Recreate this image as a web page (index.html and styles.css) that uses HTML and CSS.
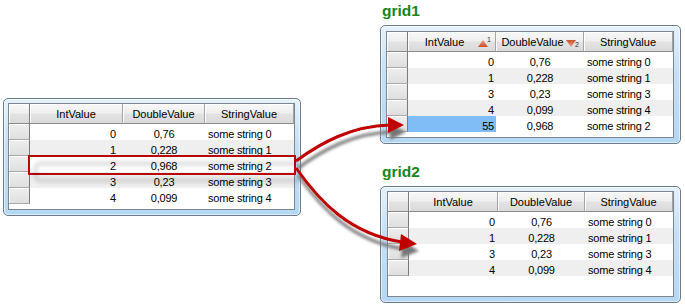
FILE: index.html
```html
<!DOCTYPE html>
<html>
<head>
<meta charset="utf-8">
<link rel="stylesheet" href="styles.css">
</head>
<body>
<div class="canvas">

  <div class="window win-src">
    <div class="grid cols-src">
      <div class="hdr">
        <div class="hc corner"></div>
        <div class="hc">IntValue</div>
        <div class="hc">DoubleValue</div>
        <div class="hc">StringValue</div>
      </div>
      <div class="row"><div class="ind"></div><div class="c num">0</div><div class="c dbl">0,76</div><div class="c str">some string 0</div></div>
      <div class="row alt"><div class="ind"></div><div class="c num">1</div><div class="c dbl">0,228</div><div class="c str">some string 1</div></div>
      <div class="row"><div class="ind"></div><div class="c num">2</div><div class="c dbl">0,968</div><div class="c str">some string 2</div></div>
      <div class="row alt"><div class="ind"></div><div class="c num">3</div><div class="c dbl">0,23</div><div class="c str">some string 3</div></div>
      <div class="row"><div class="ind"></div><div class="c num">4</div><div class="c dbl">0,099</div><div class="c str">some string 4</div></div>
    </div>
  </div>

  <div class="red-box"></div>

  <div class="node node1">
    <h2 class="title">grid1</h2>
    <div class="window win1">
      <div class="grid cols-1">
        <div class="hdr">
          <div class="hc corner"></div>
          <div class="hc sorted">IntValue
            <span class="sort">
              <svg width="10" height="7" viewBox="0 0 10 7"><defs><linearGradient id="gu" x1="0" y1="0" x2="0" y2="1"><stop offset="0" stop-color="#f0a080"/><stop offset="1" stop-color="#c8502c"/></linearGradient></defs><polygon points="5,0 10,7 0,7" fill="url(#gu)"/></svg>
              <span class="sort-n up">1</span>
            </span>
          </div>
          <div class="hc sorted">DoubleValue
            <span class="sort">
              <svg width="10" height="7" viewBox="0 0 10 7"><defs><linearGradient id="gd" x1="0" y1="0" x2="0" y2="1"><stop offset="0" stop-color="#c8502c"/><stop offset="1" stop-color="#f0a080"/></linearGradient></defs><polygon points="0,0 10,0 5,7" fill="url(#gd)"/></svg>
              <span class="sort-n down">2</span>
            </span>
          </div>
          <div class="hc">StringValue</div>
        </div>
        <div class="row"><div class="ind"></div><div class="c num">0</div><div class="c dbl">0,76</div><div class="c str">some string 0</div></div>
        <div class="row alt"><div class="ind"></div><div class="c num">1</div><div class="c dbl">0,228</div><div class="c str">some string 1</div></div>
        <div class="row"><div class="ind"></div><div class="c num">3</div><div class="c dbl">0,23</div><div class="c str">some string 3</div></div>
        <div class="row alt"><div class="ind"></div><div class="c num">4</div><div class="c dbl">0,099</div><div class="c str">some string 4</div></div>
        <div class="row"><div class="ind"></div><div class="c num sel">55</div><div class="c dbl">0,968</div><div class="c str">some string 2</div></div>
      </div>
    </div>
  </div>

  <div class="node node2">
    <h2 class="title">grid2</h2>
    <div class="window win2">
      <div class="grid cols-2">
        <div class="hdr">
          <div class="hc corner"></div>
          <div class="hc">IntValue</div>
          <div class="hc">DoubleValue</div>
          <div class="hc">StringValue</div>
        </div>
        <div class="row"><div class="ind"></div><div class="c num">0</div><div class="c dbl">0,76</div><div class="c str">some string 0</div></div>
        <div class="row alt"><div class="ind"></div><div class="c num">1</div><div class="c dbl">0,228</div><div class="c str">some string 1</div></div>
        <div class="row"><div class="ind"></div><div class="c num">3</div><div class="c dbl">0,23</div><div class="c str">some string 3</div></div>
        <div class="row alt"><div class="ind"></div><div class="c num">4</div><div class="c dbl">0,099</div><div class="c str">some string 4</div></div>
      </div>
    </div>
  </div>

  <svg class="arrows" width="685" height="305" viewBox="0 0 685 305">
    <defs>
      <filter id="blur" x="-20%" y="-20%" width="140%" height="140%">
        <feGaussianBlur stdDeviation="1.8"/>
      </filter>
    </defs>
    <g class="shadow" transform="translate(2,7)" filter="url(#blur)">
      <path d="M296 161 C 322 142, 352 126, 390 125" fill="none" stroke="#777" stroke-width="3"/>
      <polygon points="388,117 404,125 388,133" fill="#777"/>
      <path d="M296 168 C 320 202, 350 234, 402 242" fill="none" stroke="#777" stroke-width="3"/>
      <polygon points="401,234 417,244 399,251" fill="#777"/>
    </g>
    <g class="arrow">
      <path d="M296 161 C 322 142, 352 126, 390 125" fill="none" stroke="#c00000" stroke-width="3"/>
      <polygon points="388,117 404,125 388,133" fill="#c00000"/>
      <path d="M296 168 C 320 202, 350 234, 402 242" fill="none" stroke="#c00000" stroke-width="3"/>
      <polygon points="401,234 417,244 399,251" fill="#c00000"/>
    </g>
  </svg>
</div>
</body>
</html>
```

FILE: styles.css
```css
* { box-sizing: border-box; }

html, body {
  margin: 0;
  padding: 0;
  background: #ffffff;
}

.canvas {
  position: relative;
  width: 685px;
  height: 305px;
  overflow: hidden;
  font-family: "Liberation Sans", Arial, sans-serif;
}

/* window frames (nodes of the diagram) */
.window {
  border: 1px solid #6c7c8c;
  border-radius: 5px;
  background: linear-gradient(#e6f2fc, #c4e0f6 40%, #b4d8f4);
  box-shadow: inset 0 0 0 1px rgba(255,255,255,0.55);
}

.win-src {
  position: absolute;
  left: 3px;
  top: 98px;
  width: 298px;
  height: 118px;
  padding: 4px 5px 5px 4px;
}

.node {
  position: absolute;
  left: 380px;
  width: 301px;
}
.node1 { top: 0; }
.node2 { top: 161px; }

.title {
  margin: 0 0 5px 0;
  padding: 2px 0 0 2px;
  height: 20px;
  font: bold 15.5px/18px "Liberation Sans", Arial, sans-serif;
  color: #188518;
}

.win1 {
  height: 119px;
  padding: 5px 6px 5px 5px;
}
.win2 {
  height: 117px;
  padding: 4px 6px 5px 6px;
}

/* grid */
.grid {
  height: 100%;
  border: 1px solid #7f858c;
  background: #ffffff;
  font-size: 11px;
  letter-spacing: -0.2px;
  color: #000;
}

.cols-src { --cols: 21px 93px 82px 1fr; --numpad: 7px; }
.cols-1   { --cols: 21px 88px 88px 1fr; --numpad: 2px; }
.cols-2   { --cols: 21px 89px 87px 1fr; --numpad: 3px; }

.hdr, .row {
  display: grid;
  grid-template-columns: var(--cols);
}

.hdr { height: 20px; }
.row { height: 16px; }
.row.alt { background: #efefef; }

.hc {
  display: flex;
  align-items: center;
  justify-content: center;
  background: linear-gradient(#f8f8f8 0%, #efefef 45%, #e2e2e2 55%, #dadada 100%);
  border-right: 1px solid #a4a4a4;
  border-bottom: 1px solid #8a8a8a;
  box-shadow: inset 1px 1px 0 #ffffff;
  white-space: nowrap;
  letter-spacing: 0;
}
.hc.corner {
  border-right-color: #7a7a7a;
}

.hc.sorted {
  position: relative;
  padding-right: 14px;
}
.sort {
  position: absolute;
  right: 3px;
  top: 4px;
  width: 14px;
  height: 12px;
}
.sort svg {
  position: absolute;
  left: 0;
  top: 4px;
}
.sort-n {
  position: absolute;
  font-size: 7px;
  line-height: 7px;
  color: #333;
}
.sort-n.up { left: 9px; top: 0; }
.sort-n.down { left: 9px; top: 5px; }

.ind {
  background: linear-gradient(#eeeeee, #dfdfdf);
  border-right: 1px solid #7a7a7a;
  border-bottom: 1px solid #aaaaaa;
  box-shadow: inset 1px 1px 0 #ffffff;
}

.c {
  padding-top: 3px;
  line-height: 14px;
  white-space: nowrap;
  overflow: hidden;
}
.num { text-align: right; padding-right: var(--numpad); }
.dbl { text-align: center; }
.str { text-align: left; padding-left: 3px; }
.sel { background: #80bdf7; }

/* drag highlight over the source row */
.red-box {
  position: absolute;
  left: 28px;
  top: 155px;
  width: 268px;
  height: 20px;
  border: 2px solid #b80808;
}
.red-box::before {
  content: "";
  position: absolute;
  left: 4px;
  top: 5px;
  right: -8px;
  bottom: -9px;
  border: 3px solid rgba(0,0,0,0.18);
  border-radius: 6px;
  filter: blur(2px);
}

.arrows {
  position: absolute;
  left: 0;
  top: 0;
  pointer-events: none;
}
```
